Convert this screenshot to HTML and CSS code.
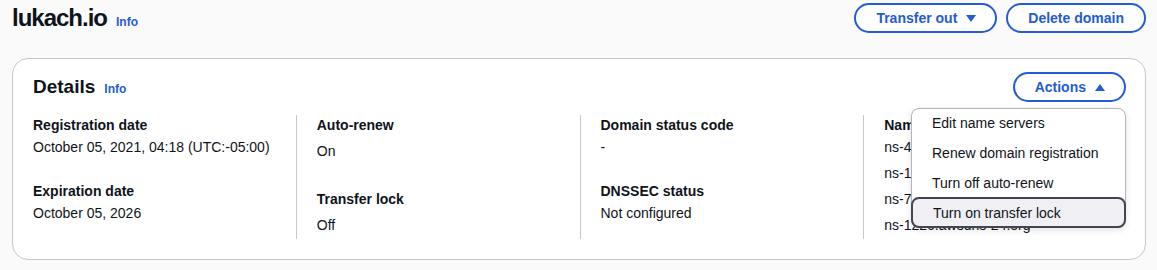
FILE: index.html
```html
<!DOCTYPE html>
<html lang="en">
<head>
<meta charset="utf-8">
<title>lukach.io</title>
<link rel="stylesheet" href="styles.css">
</head>
<body>
<div class="page">
  <header class="page-header">
    <div class="title-group">
      <h1 class="page-title">lukach.io</h1>
      <a class="info-link" href="#">Info</a>
    </div>
    <div class="header-actions">
      <button class="btn" type="button">Transfer out
        <svg class="caret" viewBox="0 0 16 16" width="16" height="16" aria-hidden="true"><polygon points="3,5 13,5 8,12"/></svg>
      </button>
      <button class="btn" type="button">Delete domain</button>
    </div>
  </header>

  <section class="card">
    <div class="card-header">
      <div class="title-group">
        <h2 class="card-title">Details</h2>
        <a class="info-link" href="#">Info</a>
      </div>
      <div class="menu-wrap">
        <button class="btn" type="button">Actions
          <svg class="caret" viewBox="0 0 16 16" width="16" height="16" aria-hidden="true"><polygon points="3,12 13,12 8,5"/></svg>
        </button>
        <ul class="menu">
          <li class="menu-item">Edit name servers</li>
          <li class="menu-item">Renew domain registration</li>
          <li class="menu-item">Turn off auto-renew</li>
          <li class="menu-item is-highlighted">Turn on transfer lock</li>
        </ul>
      </div>
    </div>

    <div class="columns">
      <div class="col">
        <div class="pair">
          <div class="label">Registration date</div>
          <div class="value">October 05, 2021, 04:18 (UTC:-05:00)</div>
        </div>
        <div class="pair">
          <div class="label">Expiration date</div>
          <div class="value">October 05, 2026</div>
        </div>
      </div>
      <div class="col">
        <div class="pair">
          <div class="label">Auto-renew</div>
          <div class="value status">On</div>
        </div>
        <div class="pair">
          <div class="label">Transfer lock</div>
          <div class="value status">Off</div>
        </div>
      </div>
      <div class="col">
        <div class="pair">
          <div class="label">Domain status code</div>
          <div class="value">-</div>
        </div>
        <div class="pair">
          <div class="label">DNSSEC status</div>
          <div class="value">Not configured</div>
        </div>
      </div>
      <div class="col">
        <div class="pair">
          <div class="label">Name servers</div>
          <ul class="ns-list">
            <li>ns-475.awsdns-59.com</li>
            <li>ns-1426.awsdns-50.org</li>
            <li>ns-789.awsdns-34.net</li>
            <li>ns-1226.awsdns-24.org</li>
          </ul>
        </div>
      </div>
    </div>
  </section>
</div>
</body>
</html>
```

FILE: styles.css
```css
* { box-sizing: border-box; }

html, body {
  margin: 0;
  padding: 0;
  background: #fafafa;
}

body {
  font-family: "Liberation Sans", Arial, sans-serif;
  font-size: 14px;
  line-height: 20px;
  color: #0f141a;
}

.page {
  padding: 3px 11px 0 12px;
}

.page-header {
  display: flex;
  justify-content: space-between;
  align-items: center;
  height: 30px;
}

.title-group {
  display: flex;
  align-items: baseline;
  gap: 9px;
}

.page-title {
  margin: 0;
  font-size: 24px;
  line-height: 30px;
  font-weight: 700;
  letter-spacing: -1px;
}

.info-link {
  font-size: 12px;
  font-weight: 700;
  color: #245bd6;
  text-decoration: none;
}

.header-actions {
  display: flex;
  gap: 9px;
}

.btn {
  display: inline-flex;
  align-items: center;
  gap: 6px;
  height: 30px;
  padding: 0 20px;
  border: 2px solid #245bd6;
  border-radius: 20px;
  background: #ffffff;
  color: #245bd6;
  font-family: inherit;
  font-size: 14px;
  font-weight: 700;
  line-height: 20px;
  cursor: pointer;
}

.btn:has(.caret) {
  padding-right: 16px;
}

.caret {
  display: block;
  fill: #245bd6;
}

.card {
  margin-top: 25px;
  background: #ffffff;
  border: 1px solid #c6c6cd;
  border-radius: 16px;
  padding: 13px 20px 20px 20px;
}

.card-header {
  display: flex;
  justify-content: space-between;
  align-items: center;
  height: 30px;
  margin-bottom: 13px;
}

.card-title {
  margin: 0;
  font-size: 19px;
  line-height: 24px;
  font-weight: 700;
}

.menu-wrap {
  position: relative;
  margin-right: -1px;
}

.menu {
  position: absolute;
  z-index: 5;
  top: calc(100% + 6px);
  right: 0;
  width: 215px;
  margin: 0;
  padding: 0;
  list-style: none;
  background: #ffffff;
  border: 1px solid #b4b4bb;
  border-radius: 8px;
  box-shadow: 0 2px 6px rgba(15, 20, 26, 0.12);
}

.menu-item {
  padding: 4px 20px 6px 20px;
  line-height: 20px;
  white-space: nowrap;
}

.menu-item.is-highlighted {
  margin: -2px -1px -1px -1px;
  padding: 4px 20px 3px 20px;
  background: #f0f0f4;
  border: 2px solid #424650;
  border-radius: 8px;
}

.columns {
  display: grid;
  grid-template-columns: repeat(4, 1fr);
  margin: 0 -22px 0 -21px;
}

.col {
  display: flex;
  flex-direction: column;
  gap: 24px;
  padding-left: 20px;
  border-left: 1px solid #c6c6cd;
}

.col:first-child {
  border-left-color: transparent;
}

.label {
  font-weight: 700;
}

.value {
  margin-top: 2px;
}

.value.status {
  padding: 4px 0;
}

.ns-list {
  margin: 2px 0 0 0;
  padding: 0;
  list-style: none;
  display: flex;
  flex-direction: column;
  gap: 6px;
}
```
